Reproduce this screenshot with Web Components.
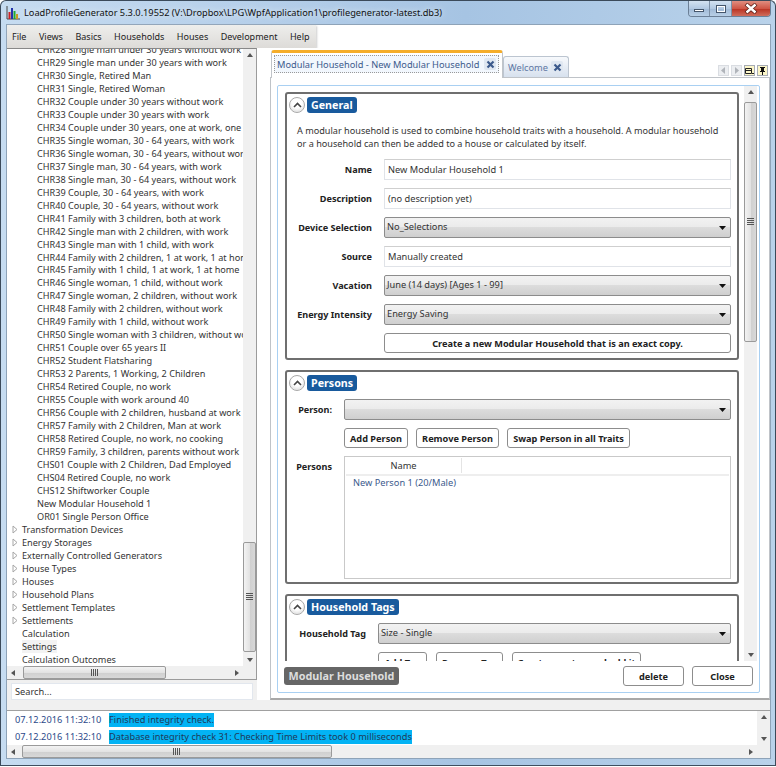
<!DOCTYPE html>
<html>
<head>
<meta charset="utf-8">
<title>LoadProfileGenerator</title>
<style>
  html, body { margin: 0; padding: 0; background: #fff; }
  body { font: 9.25px "Noto Sans", "Open Sans", sans-serif; color: #333; }
</style>
</head>
<body>

<lpg-window caption="LoadProfileGenerator 5.3.0.19552 (V:\Dropbox\LPG\WpfApplication1\profilegenerator-latest.db3)">
  <lpg-menu items="File,Views,Basics,Households,Houses,Development,Help"></lpg-menu>
  <lpg-main>
    <lpg-sidebar slot="left"></lpg-sidebar>
    <lpg-tabs slot="right">
      <lpg-section heading="General" style="height:268px">
        <lpg-note>A modular household is used to combine household traits with a household. A modular household<br>or a household can then be added to a house or calculated by itself.</lpg-note>
        <lpg-field label="Name"><lpg-input>New Modular Household 1</lpg-input></lpg-field>
        <lpg-field label="Description"><lpg-input>(no description yet)</lpg-input></lpg-field>
        <lpg-field label="Device Selection"><lpg-combo>No_Selections</lpg-combo></lpg-field>
        <lpg-field label="Source"><lpg-input>Manually created</lpg-input></lpg-field>
        <lpg-field label="Vacation"><lpg-combo>June (14 days) [Ages 1 - 99]</lpg-combo></lpg-field>
        <lpg-field label="Energy Intensity"><lpg-combo>Energy Saving</lpg-combo></lpg-field>
        <lpg-field><lpg-button style="display:flex;height:20px">Create a new Modular Household that is an exact copy.</lpg-button></lpg-field>
      </lpg-section>
      <lpg-section heading="Persons" style="height:214px">
        <lpg-field label="Person:" col="43"><lpg-combo></lpg-combo></lpg-field>
        <lpg-field col="43">
          <lpg-row>
            <lpg-button style="width:64px">Add Person</lpg-button>
            <lpg-button style="width:83px">Remove Person</lpg-button>
            <lpg-button style="width:123px">Swap Person in all Traits</lpg-button>
          </lpg-row>
        </lpg-field>
        <lpg-field label="Persons" col="43" top><lpg-list column="Name"><span>New Person 1 (20/Male)</span></lpg-list></lpg-field>
      </lpg-section>
      <lpg-section heading="Household Tags" style="height:90px">
        <lpg-field label="Household Tag" col="77"><lpg-combo>Size - Single</lpg-combo></lpg-field>
        <lpg-field col="77">
          <lpg-row gap="9">
            <lpg-button style="width:49px">Add Tag</lpg-button>
            <lpg-button style="width:67px">Remove Tag</lpg-button>
            <lpg-button style="width:129px">Create new tag and add it</lpg-button>
          </lpg-row>
        </lpg-field>
      </lpg-section>
    </lpg-tabs>
  </lpg-main>
  <lpg-log></lpg-log>
</lpg-window>

<script>
// small helper, every component just sets its html in an open shadow root
class Base extends HTMLElement {
  connectedCallback() {
    if (this.shadowRoot) return;
    this.attachShadow({ mode: "open" }).innerHTML = this.render();
  }
  attr(name, dflt) {
    return this.hasAttribute(name) ? this.getAttribute(name) : dflt;
  }
}

class LpgWindow extends Base {
  render() {
    return `
      <style>
        :host { display: flex; flex-direction: column; width: 776px; height: 766px; box-sizing: border-box; overflow: hidden;
          border: 1px solid #3b4a5a; border-radius: 6px 6px 0 0; border-bottom-color: #3f4f60;
          background: linear-gradient(90deg, #c6dcf1 0, #b7d0ea 30%, #a6c4e3 60%, #b9d2ea 100%); }
        .title { flex: none; height: 23px; display: flex; align-items: center; padding-left: 5px; gap: 4px;
          font: 9.230px "Noto Sans", sans-serif; color: #111; white-space: nowrap; }
        .ico { flex: none; }
        .cap { flex: 1; text-shadow: 0 0 6px #eef5fc; }
        .ctl { flex: none; align-self: flex-start; display: flex; height: 15px; margin-right: 4px;
          border: 1px solid #6b7f96; border-top: 0; border-radius: 0 0 4px 4px; overflow: hidden; }
        .ctl div { display: flex; align-items: center; justify-content: center; background: linear-gradient(#d3e2f1 0, #b2c9e2 50%, #9fb9d6 51%, #b8cfe6 100%); }
        .min { width: 20px; border-right: 1px solid #7d90a6; }
        .max { width: 21px; border-right: 1px solid #7d90a6; }
        .x { width: 38px; background: linear-gradient(#e08e80 0, #cf5646 50%, #b93121 51%, #cf6d5c 100%) !important; }
        .client { flex: 1; min-height: 0; margin: 0 4px 6px 5px; background: #fff; border: 1px solid #8ea3b8; display: flex; flex-direction: column; }
      </style>
      <div class="title">
        <svg class="ico" width="14" height="15" viewBox="0 0 14 15">
          <path d="M1 1v13h13" fill="none" stroke="#444"/>
          <rect x="2.500" y="7" width="2" height="7" fill="#c22"/><rect x="5" y="3" width="2" height="11" fill="#23a"/>
          <rect x="7.500" y="6" width="2" height="8" fill="#2a3"/><rect x="10" y="9" width="2" height="5" fill="#c92"/>
        </svg>
        <div class="cap">${this.attr("caption", "")}</div>
        <div class="ctl">
          <div class="min"><svg width="12" height="9"><rect x="1.500" y="5.500" width="9" height="2" fill="#fff" stroke="#45566b"/></svg></div>
          <div class="max"><svg width="12" height="10"><rect x="2" y="2" width="8" height="6" fill="none" stroke="#fff" stroke-width="2"/><rect x="1.500" y="1.500" width="9" height="7" fill="none" stroke="#45566b"/></svg></div>
          <div class="x"><svg width="14" height="11"><path d="M2 1l10 9M12 1l-10 9" stroke="#5b2018" stroke-width="4"/><path d="M2.500 1.500l9 8M11.500 1.500l-9 8" stroke="#fff" stroke-width="2.400"/></svg></div>
        </div>
      </div>
      <div class="client"><slot></slot></div>`;
  }
}

class LpgMenu extends Base {
  render() {
    const items = this.attr("items", "").split(",").map(s => `<span>${s}</span>`).join("");
    return `
      <style>
        :host { display: block; flex: none; height: 23px; }
        nav { display: inline-flex; height: 23px; align-items: center; width: 309px; box-sizing: border-box; padding-left: 5px; gap: 12.500px; font-size: 9px;
          background: linear-gradient(#eeeeec, #dddbd8); box-shadow: 1px 1px 2px #ccc; color: #222; }
      </style>
      <nav>${items}</nav>`;
  }
}

class LpgMain extends Base {
  render() {
    return `
      <style>
        :host { display: flex; flex: none; height: 662px; background: linear-gradient(#fff 652px, #f0f0f0 652px); }
        .left { flex: none; width: 263px; }
        .right { flex: 1; min-width: 0; padding-top: 2px; }
        slot { display: block; height: 100%; }
      </style>
      <div class="left"><slot name="left"></slot></div>
      <div class="right"><slot name="right"></slot></div>`;
  }
}

class LpgScroll extends Base {
  render() {
    const h = this.attr("dir", "v") == "h";
    const start = +this.attr("start", 0), size = +this.attr("size", 50);
    const grip = h ? "width:1px;height:7px;margin-right:1px" : "height:1px;width:7px;margin-bottom:1px";
    const arrowA = h ? '<path d="M5 1v6L1 4z"/>' : '<path d="M1 5h6L4 1z"/>';
    const arrowB = h ? '<path d="M2 1v6l4-3z"/>' : '<path d="M1 2h6L4 6z"/>';
    return `
      <style>
        :host { display: flex; flex: none; background: #f0f0f0; box-sizing: border-box; ${h ? "height:13px;flex-direction:row" : "width:13px;flex-direction:column"}; }
        .btn { flex: none; ${h ? "width:13px" : "height:13px"}; display: flex; align-items: center; justify-content: center; }
        .track { flex: 1; min-width: 0; min-height: 0; ${h ? `padding-left:${start}px` : `padding-top:${start}px`}; }
        .thumb { box-sizing: border-box; border: 1px solid #9a9a9a; border-radius: 2px; display: ${size ? "flex" : "none"}; align-items: center; justify-content: center;
          ${h ? `width:${size}px;height:100%;flex-direction:row;background:linear-gradient(#f3f3f3,#e3e3e3 50%,#cfcfcf 51%,#d8d8d8)` : `height:${size}px;width:100%;flex-direction:column;background:linear-gradient(90deg,#f3f3f3,#e3e3e3 50%,#cfcfcf 51%,#d8d8d8)`}; }
        .thumb i { display: block; ${grip}; background: #555; }
        svg { fill: #555; }
      </style>
      <div class="btn"><svg width="8" height="8">${arrowA}</svg></div>
      <div class="track"><div class="thumb"><i></i><i></i><i></i><i></i></div></div>
      <div class="btn"><svg width="8" height="8">${arrowB}</svg></div>`;
  }
}

const HOUSEHOLDS = ["CHR28 Single man under 30 years without work","CHR29 Single man under 30 years with work","CHR30 Single, Retired Man","CHR31 Single, Retired Woman","CHR32 Couple under 30 years without work","CHR33 Couple under 30 years with work","CHR34 Couple under 30 years, one at work, one at home","CHR35 Single woman, 30 - 64 years, with work","CHR36 Single woman, 30 - 64 years, without work","CHR37 Single man, 30 - 64 years, with work","CHR38 Single man, 30 - 64 years, without work","CHR39 Couple, 30 - 64 years, with work","CHR40 Couple, 30 - 64 years, without work","CHR41 Family with 3 children, both at work","CHR42 Single man with 2 children, with work","CHR43 Single man with 1 child, with work","CHR44 Family with 2 children, 1 at work, 1 at home","CHR45 Family with 1 child, 1 at work, 1 at home","CHR46 Single woman, 1 child, without work","CHR47 Single woman, 2 children, without work","CHR48 Family with 2 children, without work","CHR49 Family with 1 child, without work","CHR50 Single woman with 3 children, without work","CHR51 Couple over 65 years II","CHR52 Student Flatsharing","CHR53 2 Parents, 1 Working, 2 Children","CHR54 Retired Couple, no work","CHR55 Couple with work around 40","CHR56 Couple with 2 children, husband at work","CHR57 Family with 2 Children, Man at work","CHR58 Retired Couple, no work, no cooking","CHR59 Family, 3 children, parents without work","CHS01 Couple with 2 Children, Dad Employed","CHS04 Retired Couple, no work","CHS12 Shiftworker Couple","New Modular Household 1","OR01 Single Person Office"];
const TOP_NODES = ["Transformation Devices","Energy Storages","Externally Controlled Generators","House Types","Houses","Household Plans","Settlement Templates","Settlements"];
const LEAF_NODES = ["Calculation","Settings","Calculation Outcomes"];

class LpgSidebar extends Base {
  render() {
    const kids = HOUSEHOLDS.map(t => `<div class="row kid">${t}</div>`).join("");
    const tops = TOP_NODES.map(t => `<div class="row top"><svg width="7" height="9"><path d="M1 1l4 3.500L1 8z" fill="#fff" stroke="#a6a6a6"/></svg>${t}</div>`).join("");
    const leaves = LEAF_NODES.map(t => `<div class="row top leaf"><span class="${t == "Settings" ? "hov" : ""}">${t}</span></div>`).join("");
    return `
      <style>
        :host { display: flex; flex-direction: column; height: 100%; }
        .box { flex: none; width: 250px; height: 632px; box-sizing: border-box; border: 1px solid #9b9b9b; border-top: 1px solid #888; border-left: 0; display: grid; grid-template: 1fr 13px / 1fr 13px; background: #fff; }
        .list { overflow: hidden; min-width: 0; min-height: 0; font-size: 9.150px; }
        .inner { margin-top: -6px; white-space: nowrap; color: #333; }
        .row { height: 12.980px; line-height: 12.980px; }
        .kid { padding-left: 30px; }
        .top { padding-left: 5px; display: flex; align-items: center; gap: 3px; }
        .top svg { flex: none; }
        .leaf { padding-left: 15px; }
        .hov { background: #f3f3f3; }
        .corner { background: #f0f0f0; }
        .search { flex: none; width: 250px; height: 20px; box-sizing: border-box; background: #f0f0f0; padding: 3px 4px 0 4px; }
        .search div { height: 17px; line-height: 15px; box-sizing: border-box; background: #fff; border: 1px solid #e2e7ee; padding-left: 3px; color: #333; }
      </style>
      <div class="box">
        <div class="list"><div class="inner">${kids}${tops}${leaves}</div></div>
        <lpg-scroll start="480" size="110"></lpg-scroll>
        <lpg-scroll dir="h" start="3" size="143"></lpg-scroll>
        <div class="corner"></div>
      </div>
      <div class="search"><div>Search...</div></div>`;
  }
}

class LpgTabs extends Base {
  render() {
    const closeIco = `<svg width="9" height="9"><path d="M1.500 1.500l6 6M7.500 1.500l-6 6" stroke="#3c5a8c" stroke-width="2.200"/></svg>`;
    return `
      <style>
        :host { display: flex; flex-direction: column; height: 650px; }
        .strip { flex: none; height: 27px; display: flex; align-items: flex-end; position: relative; z-index: 1; padding-left: 1px; }
        .tab { box-sizing: border-box; display: flex; align-items: center; white-space: nowrap; color: #3c5a8c; }
        .on { width: 232px; height: 28px; background: #fff; border: 1px solid #c0c4c9; border-top: 3px solid #f5ad2a; border-bottom: 0; border-radius: 3px 3px 0 0; padding: 2px 3px 5px 2px; margin-bottom: -1px; }
        .dots { flex: 1; align-self: stretch; display: flex; align-items: center; justify-content: space-between; border: 1px dotted #999; padding: 0 2px 0 2px; background: #f2f7fd; }
        .off { width: 66px; height: 21px; padding: 0 5px 0 4px; justify-content: space-between; background: linear-gradient(#f7f9fc, #d7e1ee); border: 1px solid #bcc5d0; border-bottom: 0; border-radius: 3px 3px 0 0; color: #6078a4; }
        .box { display: flex; align-items: center; justify-content: center; width: 12px; height: 12px; background: #dfe7f1; border-radius: 2px; }
        .tools { margin-left: auto; align-self: flex-end; display: flex; gap: 2px; padding: 0 2px 1px 0; }
        .tools div { box-sizing: border-box; width: 11px; height: 11px; background: #eceef1; border: 1px solid #dadde2; display: flex; align-items: center; justify-content: center; }
        .tools .y { background: #fcf6c8; border-color: #a7acb5; }
        .pane { flex: none; height: 623px; box-sizing: border-box; border: 1px solid #bfc3c8; border-bottom: 2px solid #a8a8a8; padding: 7px 9px 5px 6px; background: #fff; }
        .inner { height: 100%; box-sizing: border-box; border: 1px solid #a9d0f2; border-radius: 2px; display: flex; flex-direction: column; }
        .top { flex: 1; min-height: 0; display: flex; padding-right: 2px; }
        .scrollview { flex: 1; min-width: 0; overflow: hidden; padding: 6px 5px 0 7px; }
        ::slotted(lpg-section) { margin-bottom: 10px; }
        .foot { flex: none; height: 31px; box-sizing: border-box; display: flex; align-items: flex-start; padding: 5px 6px 0 6px; gap: 8px; }
        .chip { flex: none; box-sizing: border-box; background: #666; color: #ddd; font-weight: 700; font-size: 10.800px; border-radius: 3px; height: 18px; line-height: 18px; text-align: center; margin: 1px auto 0 0; width: 115px; white-space: nowrap; }
      </style>
      <div class="strip">
        <div class="tab on"><div class="dots">Modular Household - New Modular Household <span class="box">${closeIco}</span></div></div>
        <div class="tab off">Welcome <span class="box">${closeIco}</span></div>
        <div class="tools">
          <div><svg width="5" height="7" fill="#b0b4ba"><path d="M4 0v7L0 3.500z"/></svg></div>
          <div><svg width="5" height="7" fill="#b0b4ba"><path d="M1 0v7l4-3.500z"/></svg></div>
          <div class="y"><svg width="9" height="8" fill="none" stroke="#222"><path d="M.5 1.500h6v5h-6zM.5 3.500h6"/><path d="M7 6.500h2"/></svg></div>
          <div class="y"><svg width="7" height="8" fill="#111"><path d="M1 0h5v1H5v3h1v1H4v3H3V5H1V4h1V1H1z"/></svg></div>
        </div>
      </div>
      <div class="pane">
        <div class="inner">
          <div class="top">
            <div class="scrollview"><slot></slot></div>
            <lpg-scroll start="3" size="240"></lpg-scroll>
          </div>
          <div class="foot">
            <div class="chip">Modular Household</div>
            <lpg-button style="width:61px;height:20px">delete</lpg-button>
            <lpg-button style="width:61px;height:20px">Close</lpg-button>
          </div>
        </div>
      </div>`;
  }
}

class LpgSection extends Base {
  render() {
    return `
      <style>
        :host { display: block; box-sizing: border-box; border: 2px solid #6f6f6f; border-radius: 3px; overflow: hidden; padding: 3px 6px 0 2px; background: #fff; }
        .head { display: flex; align-items: center; gap: 2px; height: 16px; margin-bottom: 8px; }
        .circle { box-sizing: border-box; width: 16px; height: 16px; border: 1px solid #a8a8a8; border-radius: 50%; display: flex; align-items: center; justify-content: center; background: #fff; box-shadow: inset 0 -2px 3px #e4e4e4; }
        .chip { background: #185a9d; color: #fff; font-weight: 700; font-size: 10.700px; border-radius: 3px; line-height: 16px; height: 16px; padding: 0 4px; white-space: nowrap; }
        .body { display: flex; flex-direction: column; }
      </style>
      <div class="head">
        <div class="circle"><svg width="9" height="6" fill="none" stroke="#444" stroke-width="1.600"><path d="M1 5l3.500-3.500L8 5"/></svg></div>
        <div class="chip">${this.attr("heading", "")}</div>
      </div>
      <div class="body"><slot></slot></div>`;
  }
}

class LpgNote extends Base {
  render() {
    return `
      <style>:host { display: block; font-size: 9.150px; line-height: 13px; padding: 3px 0 9px 8px; color: #333; white-space: nowrap; }</style>
      <slot></slot>`;
  }
}

// label on the left, right aligned, control on the right
class LpgField extends Base {
  render() {
    const col = this.attr("col", "83");
    const top = this.hasAttribute("top");
    return `
      <style>
        :host { display: grid; grid-template-columns: ${col}px 1fr; column-gap: 12px; margin-bottom: 8px; align-items: ${top ? "start" : "center"}; }
        .label { font-weight: 700; font-size: 9.100px; text-align: right; white-space: nowrap; color: #222; ${top ? "padding-top: 4px;" : ""} }
      </style>
      <div class="label">${this.attr("label", "")}</div>
      <div><slot></slot></div>`;
  }
}

class LpgInput extends Base {
  render() {
    return `
      <style>
        :host { display: block; height: 21px; box-sizing: border-box; line-height: 19px; padding-left: 3px; border: 1px solid #e0e3e8; border-top-color: #cfcfcf; background: #fff; color: #333; }
      </style>
      <slot></slot>`;
  }
}

class LpgCombo extends Base {
  render() {
    return `
      <style>
        :host { display: flex; height: 21px; box-sizing: border-box; justify-content: space-between; padding: 0 4px 3px 2px; align-items: center; border: 1px solid #8c8c8c; border-radius: 2px;
          background: linear-gradient(#f2f2f2, #ebebeb 48%, #dcdcdc 50%, #cfcfcf); color: #333; }
        svg { margin-top: 3px; }
      </style>
      <div><slot></slot></div>
      <svg width="7" height="4"><path d="M0 0h7L3.500 4z" fill="#111"/></svg>`;
  }
}

class LpgButton extends Base {
  render() {
    return `
      <style>
        :host { display: inline-flex; align-items: center; justify-content: center; box-sizing: border-box; height: 20px; flex: none;
          border: 1px solid #8d8d8d; border-radius: 3px; background: #fff; font-weight: 700; font-size: 9.200px; color: #222; white-space: nowrap; overflow: hidden; }
      </style>
      <slot></slot>`;
  }
}

class LpgRow extends Base {
  render() {
    return `<style>:host { display: flex; gap: ${this.attr("gap", "8")}px; }</style><slot></slot>`;
  }
}

class LpgList extends Base {
  render() {
    return `
      <style>
        :host { display: block; height: 123px; box-sizing: border-box; border: 1px solid #c9c9c9; background: #fff; padding: 1px; }
        .hd { height: 16px; line-height: 15px; border-bottom: 2px solid #eee; }
        .hd div { width: 115px; text-align: center; border-right: 1px solid #e4e4e4; height: 15px; color: #333; }
        .rows { padding: 0 7px; color: #3c5a8c; }
      </style>
      <div class="hd"><div>${this.attr("column", "")}</div></div>
      <div class="rows"><slot></slot></div>`;
  }
}

class LpgLog extends Base {
  render() {
    const rows = [
      ["07.12.2016 11:32:10", "Finished integrity check."],
      ["07.12.2016 11:32:10", "Database integrity check 31: Checking Time Limits took 0 milliseconds"]
    ].map(r => `<div class="r"><span class="d">${r[0]}</span><span class="m">${r[1]}</span></div>`).join("");
    return `
      <style>
        :host { display: grid; flex: none; height: 48px; box-sizing: border-box; grid-template: 1fr 13px / 1fr 13px; border-top: 1px solid #a0a0a0; background: #fff; }
        .rows { padding-top: 2px; overflow: hidden; white-space: nowrap; }
        .r { height: 17px; display: flex; padding-left: 8px; align-items: flex-start; }
        .d { width: 94px; color: #2c4a8a; line-height: 14px; flex: none; }
        .m { background: #03b3f4; color: #1f3a5a; line-height: 14px; height: 14px; }
      </style>
      <div class="rows">${rows}</div>
      <lpg-scroll start="0" size="0"></lpg-scroll>
      <lpg-scroll dir="h" start="2" size="310"></lpg-scroll>
      <div style="background:#f0f0f0"></div>`;
  }
}

customElements.define("lpg-window", LpgWindow);
customElements.define("lpg-menu", LpgMenu);
customElements.define("lpg-main", LpgMain);
customElements.define("lpg-scroll", LpgScroll);
customElements.define("lpg-sidebar", LpgSidebar);
customElements.define("lpg-tabs", LpgTabs);
customElements.define("lpg-section", LpgSection);
customElements.define("lpg-note", LpgNote);
customElements.define("lpg-field", LpgField);
customElements.define("lpg-input", LpgInput);
customElements.define("lpg-combo", LpgCombo);
customElements.define("lpg-button", LpgButton);
customElements.define("lpg-row", LpgRow);
customElements.define("lpg-list", LpgList);
customElements.define("lpg-log", LpgLog);
</script>
</body>
</html>
